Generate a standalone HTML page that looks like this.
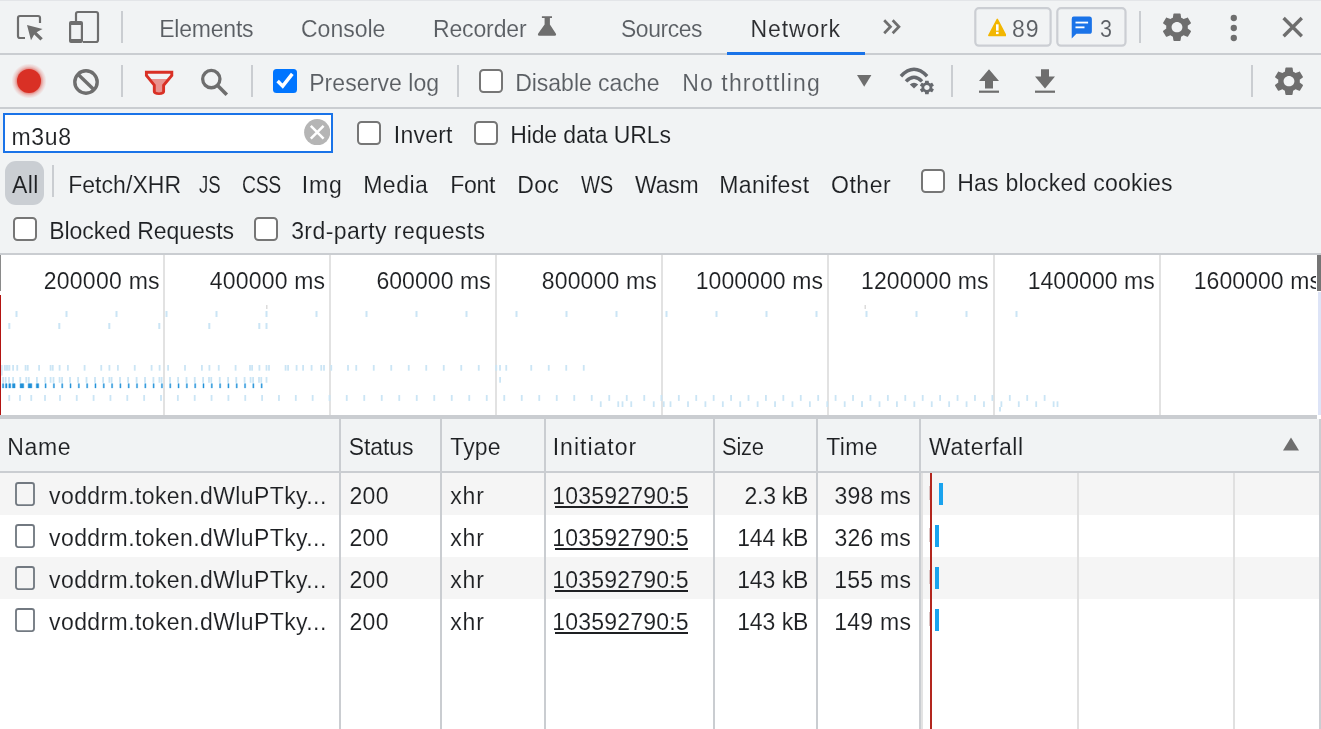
<!DOCTYPE html>
<html><head><meta charset="utf-8"><title>DevTools - Network</title>
<style>
html,body{margin:0;padding:0;background:#fff;}
body{width:1321px;height:729px;position:relative;overflow:hidden;font-family:"Liberation Sans",sans-serif;}
.t{position:absolute;white-space:nowrap;line-height:30px;font-kerning:normal;transform-origin:0 0;}
#txt{position:absolute;left:0;top:0;width:1321px;height:729px;will-change:transform;}
</style></head><body>
<div style="position:absolute;left:0px;top:0px;width:1321px;height:255px;background:#f1f3f4;"></div>
<div style="position:absolute;left:0px;top:0px;width:1321px;height:1px;background:#e3e5e8;"></div>
<div style="position:absolute;left:0px;top:53px;width:1321px;height:1.5px;background:#cacdd1;"></div>
<div style="position:absolute;left:0px;top:107px;width:1321px;height:2px;background:#cacdd1;"></div>
<div style="position:absolute;left:0px;top:253px;width:1321px;height:2px;background:#cacdd1;"></div>
<div style="position:absolute;left:727px;top:52px;width:138.3px;height:2.6px;background:#1a73e8;"></div>
<div style="position:absolute;left:121px;top:11px;width:2px;height:32px;background:#cacdd1;"></div>
<div style="position:absolute;left:1139px;top:11px;width:2px;height:31.5px;background:#cacdd1;"></div>
<div style="position:absolute;left:121px;top:65px;width:2px;height:32px;background:#cacdd1;"></div>
<div style="position:absolute;left:251px;top:65px;width:2px;height:32px;background:#cacdd1;"></div>
<div style="position:absolute;left:457px;top:65px;width:2px;height:32px;background:#cacdd1;"></div>
<div style="position:absolute;left:951px;top:65px;width:2px;height:32px;background:#cacdd1;"></div>
<div style="position:absolute;left:1250.5px;top:65px;width:2px;height:32px;background:#cacdd1;"></div>
<div style="position:absolute;left:52px;top:165px;width:2px;height:32px;background:#cacdd1;"></div>
<svg style="position:absolute;left:14px;top:12px" width="32" height="32" viewBox="0 0 32 32"><path d="M11 26 H6 Q4 26 4 24 V6 Q4 4 6 4 H24 Q26 4 26 6 V11" fill="none" stroke="#6e6e6e" stroke-width="2.2"/><path d="M13 13 L28.5 17 L22.6 20.2 L28.8 26.2 L26.4 28.6 L20.2 22.6 L17 28.3 Z" fill="#6e6e6e"/></svg>
<svg style="position:absolute;left:66px;top:8px" width="38" height="38" viewBox="0 0 38 38"><path d="M10 13 V6 Q10 4 12 4 H30 Q32 4 32 6 V32 Q32 34 30 34 H17" fill="none" stroke="#6e6e6e" stroke-width="2.2"/><path d="M5 13 H15 Q17 13 17 15 V33 Q17 35 15 35 H5 Q3 35 3 33 V15 Q3 13 5 13 Z M5.2 17 V31 H14.8 V17 Z" fill="#6e6e6e" fill-rule="evenodd"/></svg>
<svg style="position:absolute;left:535px;top:14px" width="24" height="24" viewBox="0 0 24 24"><path d="M6.9 2.2 H17 V3.9 H14.9 V10.6 L20.8 19.6 Q21.8 21.8 19.6 21.8 H4.4 Q2.2 21.8 3.2 19.6 L9.6 10.6 V3.9 H6.9 Z" fill="#6e6e6e"/></svg>
<svg style="position:absolute;left:881.4px;top:17.4px" width="22.6" height="19.6" viewBox="0 0 24 20" preserveAspectRatio="none"><path d="M3.4 3.4 L10 10 L3.4 16.6 M12.4 3.4 L19 10 L12.4 16.6" fill="none" stroke="#6e6e6e" stroke-width="2.9"/></svg>
<svg style="position:absolute;left:970px;top:4px" width="160" height="46" viewBox="970 4 160 46"><rect x="975.3" y="8.2" width="75.3" height="37.5" rx="3.6" fill="none" stroke="#cbced3" stroke-width="2.2"/><rect x="1057.3" y="8.2" width="68.2" height="37.5" rx="3.6" fill="none" stroke="#cbced3" stroke-width="2.2"/></svg>
<svg style="position:absolute;left:987.7px;top:17.5px" width="18.6" height="19.2" viewBox="0 0 20 20" preserveAspectRatio="none"><path d="M10 1.4 L19.1 18.2 H0.9 Z" fill="#f2b600" stroke="#f2b600" stroke-width="1.6" stroke-linejoin="round"/><rect x="8.6" y="6.6" width="2.8" height="6.6" fill="#fff"/><rect x="8.6" y="14.4" width="2.8" height="2.4" fill="#fff"/></svg>
<svg style="position:absolute;left:1071.4px;top:15.8px" width="21.6" height="23" viewBox="0 0 24 24" preserveAspectRatio="none"><path d="M3 0.6 H20.5 Q23.2 0.6 23.2 3.3 V15.8 Q23.2 18.5 20.5 18.5 H6 L0.8 23.4 V3 Q0.8 0.6 3 0.6 Z" fill="#1a73e8"/><rect x="5" y="5.9" width="14" height="1.9" fill="#fff"/><rect x="5" y="10.9" width="10" height="1.9" fill="#fff"/></svg>
<svg style="position:absolute;left:1159px;top:9.81px" width="36" height="34.38" viewBox="0 0 24 24" preserveAspectRatio="none"><path d="M19.14,12.94c0.04-0.3,0.06-0.61,0.06-0.94c0-0.32-0.02-0.64-0.07-0.94l2.03-1.58c0.18-0.14,0.23-0.41,0.12-0.61 l-1.92-3.32c-0.12-0.22-0.37-0.29-0.59-0.22l-2.39,0.96c-0.5-0.38-1.03-0.7-1.62-0.94L14.4,2.81c-0.04-0.24-0.24-0.41-0.48-0.41 h-3.84c-0.24,0-0.43,0.17-0.47,0.41L9.25,5.35C8.66,5.59,8.12,5.92,7.63,6.29L5.24,5.33c-0.22-0.08-0.47,0-0.59,0.22L2.74,8.87 C2.62,9.08,2.66,9.34,2.86,9.48l2.03,1.58C4.84,11.36,4.8,11.69,4.8,12s0.02,0.64,0.07,0.94l-2.03,1.58 c-0.18,0.14-0.23,0.41-0.12,0.61l1.92,3.32c0.12,0.22,0.37,0.29,0.59,0.22l2.39-0.96c0.5,0.38,1.03,0.7,1.62,0.94l0.36,2.54 c0.05,0.24,0.24,0.41,0.48,0.41h3.84c0.24,0,0.44-0.17,0.47-0.41l0.36-2.54c0.59-0.24,1.13-0.56,1.62-0.94l2.39,0.96 c0.22,0.08,0.47,0,0.59-0.22l1.92-3.32c0.12-0.22,0.07-0.47-0.12-0.61L19.14,12.94z M12,15.6c-1.98,0-3.6-1.62-3.6-3.6 s1.62-3.6,3.6-3.6s3.6,1.62,3.6,3.6S13.98,15.6,12,15.6z" fill="#6e6e6e"/></svg>
<svg style="position:absolute;left:1270.6px;top:64.01px" width="36" height="34.38" viewBox="0 0 24 24" preserveAspectRatio="none"><path d="M19.14,12.94c0.04-0.3,0.06-0.61,0.06-0.94c0-0.32-0.02-0.64-0.07-0.94l2.03-1.58c0.18-0.14,0.23-0.41,0.12-0.61 l-1.92-3.32c-0.12-0.22-0.37-0.29-0.59-0.22l-2.39,0.96c-0.5-0.38-1.03-0.7-1.62-0.94L14.4,2.81c-0.04-0.24-0.24-0.41-0.48-0.41 h-3.84c-0.24,0-0.43,0.17-0.47,0.41L9.25,5.35C8.66,5.59,8.12,5.92,7.63,6.29L5.24,5.33c-0.22-0.08-0.47,0-0.59,0.22L2.74,8.87 C2.62,9.08,2.66,9.34,2.86,9.48l2.03,1.58C4.84,11.36,4.8,11.69,4.8,12s0.02,0.64,0.07,0.94l-2.03,1.58 c-0.18,0.14-0.23,0.41-0.12,0.61l1.92,3.32c0.12,0.22,0.37,0.29,0.59,0.22l2.39-0.96c0.5,0.38,1.03,0.7,1.62,0.94l0.36,2.54 c0.05,0.24,0.24,0.41,0.48,0.41h3.84c0.24,0,0.44-0.17,0.47-0.41l0.36-2.54c0.59-0.24,1.13-0.56,1.62-0.94l2.39,0.96 c0.22,0.08,0.47,0,0.59-0.22l1.92-3.32c0.12-0.22,0.07-0.47-0.12-0.61L19.14,12.94z M12,15.6c-1.98,0-3.6-1.62-3.6-3.6 s1.62-3.6,3.6-3.6s3.6,1.62,3.6,3.6S13.98,15.6,12,15.6z" fill="#6e6e6e"/></svg>
<svg style="position:absolute;left:1229px;top:12.7px" width="10" height="10" viewBox="0 0 10 10"><circle cx="4.8" cy="5" r="3.15" fill="#6e6e6e"/></svg>
<svg style="position:absolute;left:1229px;top:22.9px" width="10" height="10" viewBox="0 0 10 10"><circle cx="4.8" cy="5" r="3.15" fill="#6e6e6e"/></svg>
<svg style="position:absolute;left:1229px;top:33.1px" width="10" height="10" viewBox="0 0 10 10"><circle cx="4.8" cy="5" r="3.15" fill="#6e6e6e"/></svg>
<svg style="position:absolute;left:1280px;top:15px" width="24" height="24" viewBox="0 0 24 24"><path d="M3.6 3 L21.8 21.2 M21.8 3 L3.6 21.2" fill="none" stroke="#6e6e6e" stroke-width="3.4"/></svg>
<div style="position:absolute;left:11px;top:63px;width:36px;height:36px;background:radial-gradient(circle closest-side, rgba(217,48,37,.55) 0, rgba(217,48,37,.55) 66%, rgba(217,48,37,.22) 80%, rgba(217,48,37,0) 97%);border-radius:50%;"></div>
<div style="position:absolute;left:17px;top:69px;width:24px;height:24px;background:#d93025;border-radius:50%;"></div>
<svg style="position:absolute;left:72px;top:68px" width="28" height="28" viewBox="0 0 28 28"><circle cx="14" cy="14" r="11.2" fill="none" stroke="#6e6e6e" stroke-width="3.4"/><path d="M6 6.2 L22 21.8" stroke="#6e6e6e" stroke-width="3.4"/></svg>
<svg style="position:absolute;left:140px;top:66px" width="40" height="34" viewBox="140 66 40 34"><path d="M150.6 79 H167.8 L163.4 85 V92 H154.4 V85 Z" fill="#e8938f"/><path d="M146.4 72.2 H171.8 V75.4 L163.6 85.2 V91.6 Q163.6 93.6 159 93.6 Q154.3 93.6 154.3 91.6 V85.2 L146.4 75.4 Z" fill="none" stroke="#d93025" stroke-width="2.9" stroke-linejoin="miter"/></svg>
<svg style="position:absolute;left:198px;top:66px" width="34" height="34" viewBox="198 66 34 34"><circle cx="211.3" cy="79.1" r="8.65" fill="none" stroke="#6e6e6e" stroke-width="3.3"/><path d="M217.6 85.6 L226.8 94.8" stroke="#6e6e6e" stroke-width="3.6"/></svg>
<svg style="position:absolute;left:273px;top:69px" width="24" height="24" viewBox="0 0 24 24"><rect x="0" y="0" width="24" height="24" rx="3.5" fill="#0075ff"/><path d="M4.6 12.1 L9.7 17.2 L19.3 4.9" fill="none" stroke="#fff" stroke-width="3.5"/></svg>
<div style="position:absolute;left:479px;top:69px;width:20px;height:20px;background:#fff;border:2px solid #767676;border-radius:4.5px;"></div>
<svg style="position:absolute;left:857px;top:75px" width="15" height="12" viewBox="0 0 15 12"><path d="M0 0 H14.4 L7.2 11.8 Z" fill="#6e6e6e"/></svg>
<svg style="position:absolute;left:897px;top:64px" width="40" height="34" viewBox="0 0 40 34"><path d="M3.9 12.2 Q17 -1.6 30.1 12.2" fill="none" stroke="#66696e" stroke-width="3.5"/><path d="M9 17.4 Q17 9.2 25 17.4" fill="none" stroke="#66696e" stroke-width="3.5"/><path d="M12.8 20.6 Q17 16.8 21.2 20.6 L17 24.4 Z" fill="#66696e"/></svg>
<div style="position:absolute;left:918.5px;top:79.5px;width:17px;height:17px;background:#f1f3f4;border-radius:50%;"></div>
<svg style="position:absolute;left:917.6px;top:79.3005px" width="17.8" height="16.999" viewBox="0 0 24 24" preserveAspectRatio="none"><path d="M19.14,12.94c0.04-0.3,0.06-0.61,0.06-0.94c0-0.32-0.02-0.64-0.07-0.94l2.03-1.58c0.18-0.14,0.23-0.41,0.12-0.61 l-1.92-3.32c-0.12-0.22-0.37-0.29-0.59-0.22l-2.39,0.96c-0.5-0.38-1.03-0.7-1.62-0.94L14.4,2.81c-0.04-0.24-0.24-0.41-0.48-0.41 h-3.84c-0.24,0-0.43,0.17-0.47,0.41L9.25,5.35C8.66,5.59,8.12,5.92,7.63,6.29L5.24,5.33c-0.22-0.08-0.47,0-0.59,0.22L2.74,8.87 C2.62,9.08,2.66,9.34,2.86,9.48l2.03,1.58C4.84,11.36,4.8,11.69,4.8,12s0.02,0.64,0.07,0.94l-2.03,1.58 c-0.18,0.14-0.23,0.41-0.12,0.61l1.92,3.32c0.12,0.22,0.37,0.29,0.59,0.22l2.39-0.96c0.5,0.38,1.03,0.7,1.62,0.94l0.36,2.54 c0.05,0.24,0.24,0.41,0.48,0.41h3.84c0.24,0,0.44-0.17,0.47-0.41l0.36-2.54c0.59-0.24,1.13-0.56,1.62-0.94l2.39,0.96 c0.22,0.08,0.47,0,0.59-0.22l1.92-3.32c0.12-0.22,0.07-0.47-0.12-0.61L19.14,12.94z M12,15.6c-1.98,0-3.6-1.62-3.6-3.6 s1.62-3.6,3.6-3.6s3.6,1.62,3.6,3.6S13.98,15.6,12,15.6z" fill="#66696e"/></svg>
<svg style="position:absolute;left:977px;top:67px" width="24" height="28" viewBox="0 0 24 28"><path d="M12 2.2 L22 14 H16 V21.4 H8 V14 H2 Z" fill="#6e6e6e"/><rect x="2" y="23.6" width="20" height="2.2" fill="#6e6e6e"/></svg>
<svg style="position:absolute;left:1033px;top:67px" width="24" height="28" viewBox="0 0 24 28"><path d="M12 21.4 L22 9.6 H16 V2.2 H8 V9.6 H2 Z" fill="#6e6e6e"/><rect x="2" y="23.6" width="20" height="2.2" fill="#6e6e6e"/></svg>
<div style="position:absolute;left:3px;top:113px;width:325.5px;height:35.5px;background:#fff;border:2px solid #1a73e8;"></div>
<svg style="position:absolute;left:303.8px;top:118.7px" width="26.4" height="26.4" viewBox="0 0 26 26"><circle cx="13" cy="13" r="12.9" fill="#b5b5b5"/><path d="M6.7 6.7 L19.3 19.3 M19.3 6.7 L6.7 19.3" stroke="#fff" stroke-width="2.5"/></svg>
<div style="position:absolute;left:357px;top:121px;width:20px;height:20px;background:#fff;border:2px solid #767676;border-radius:4.5px;"></div>
<div style="position:absolute;left:474px;top:121px;width:20px;height:20px;background:#fff;border:2px solid #767676;border-radius:4.5px;"></div>
<div style="position:absolute;left:5px;top:161px;width:39px;height:43.5px;background:#caced3;border-radius:11px;"></div>
<div style="position:absolute;left:921px;top:169px;width:20px;height:20px;background:#fff;border:2px solid #767676;border-radius:4.5px;"></div>
<div style="position:absolute;left:13px;top:217px;width:20px;height:20px;background:#fff;border:2px solid #767676;border-radius:4.5px;"></div>
<div style="position:absolute;left:254px;top:217px;width:20px;height:20px;background:#fff;border:2px solid #767676;border-radius:4.5px;"></div>
<div style="position:absolute;left:0px;top:255px;width:1321px;height:160px;background:#fff;"></div>
<div style="position:absolute;left:163px;top:255px;width:2px;height:160px;background:#e2e2e2;"></div>
<div style="position:absolute;left:329px;top:255px;width:2px;height:160px;background:#e2e2e2;"></div>
<div style="position:absolute;left:495px;top:255px;width:2px;height:160px;background:#e2e2e2;"></div>
<div style="position:absolute;left:661px;top:255px;width:2px;height:160px;background:#e2e2e2;"></div>
<div style="position:absolute;left:827px;top:255px;width:2px;height:160px;background:#e2e2e2;"></div>
<div style="position:absolute;left:993px;top:255px;width:2px;height:160px;background:#e2e2e2;"></div>
<div style="position:absolute;left:1159px;top:255px;width:2px;height:160px;background:#e2e2e2;"></div>
<div style="position:absolute;left:0px;top:255px;width:1px;height:36px;background:#8a8a8a;"></div>
<div style="position:absolute;left:0px;top:295px;width:1px;height:120px;background:#b31412;"></div>
<svg style="position:absolute;left:0;top:0" width="1321" height="420" viewBox="0 0 1321 420"><rect x="15.5" y="311" width="2" height="6" fill="#cbe5f5"/><rect x="65.5" y="311" width="2" height="6" fill="#cbe5f5"/><rect x="115.5" y="311" width="2" height="6" fill="#cbe5f5"/><rect x="165.5" y="311" width="2" height="6" fill="#cbe5f5"/><rect x="215.5" y="311" width="2" height="6" fill="#cbe5f5"/><rect x="265.5" y="311" width="2" height="6" fill="#cbe5f5"/><rect x="315.5" y="311" width="2" height="6" fill="#cbe5f5"/><rect x="365.5" y="311" width="2" height="6" fill="#cbe5f5"/><rect x="415.5" y="311" width="2" height="6" fill="#cbe5f5"/><rect x="465.5" y="311" width="2" height="6" fill="#cbe5f5"/><rect x="515.5" y="311" width="2" height="6" fill="#cbe5f5"/><rect x="565.5" y="311" width="2" height="6" fill="#cbe5f5"/><rect x="615.5" y="311" width="2" height="6" fill="#cbe5f5"/><rect x="665.5" y="311" width="2" height="6" fill="#cbe5f5"/><rect x="715.5" y="311" width="2" height="6" fill="#cbe5f5"/><rect x="765.5" y="311" width="2" height="6" fill="#cbe5f5"/><rect x="815.5" y="311" width="2" height="6" fill="#cbe5f5"/><rect x="865.5" y="311" width="2" height="6" fill="#cbe5f5"/><rect x="915.5" y="311" width="2" height="6" fill="#cbe5f5"/><rect x="965.5" y="311" width="2" height="6" fill="#cbe5f5"/><rect x="1015.5" y="311" width="2" height="6" fill="#cbe5f5"/><rect x="8.3" y="323" width="2" height="6" fill="#cbe5f5"/><rect x="58.3" y="323" width="2" height="6" fill="#cbe5f5"/><rect x="108.3" y="323" width="2" height="6" fill="#cbe5f5"/><rect x="158.3" y="323" width="2" height="6" fill="#cbe5f5"/><rect x="208.3" y="323" width="2" height="6" fill="#cbe5f5"/><rect x="258.3" y="323" width="2" height="6" fill="#cbe5f5"/><rect x="265.5" y="323" width="2" height="6" fill="#cbe5f5"/><rect x="266" y="305" width="1.5" height="4" fill="#dcdcdc"/><rect x="864.5" y="305" width="1.5" height="4" fill="#dcdcdc"/><rect x="3.85" y="365" width="1.8" height="5.7" fill="#cbe5f5"/><rect x="5.35" y="365" width="1.8" height="5.7" fill="#cbe5f5"/><rect x="6.85" y="365" width="1.8" height="5.7" fill="#cbe5f5"/><rect x="8.5" y="365" width="1.8" height="5.7" fill="#cbe5f5"/><rect x="12.2" y="365" width="1.8" height="5.7" fill="#cbe5f5"/><rect x="16.35" y="365" width="1.8" height="5.7" fill="#cbe5f5"/><rect x="24.7" y="365" width="1.8" height="5.7" fill="#cbe5f5"/><rect x="26.85" y="365" width="1.8" height="5.7" fill="#cbe5f5"/><rect x="38.2" y="365" width="1.8" height="5.7" fill="#cbe5f5"/><rect x="49.7" y="365" width="1.8" height="5.7" fill="#cbe5f5"/><rect x="51.85" y="365" width="1.8" height="5.7" fill="#cbe5f5"/><rect x="58.7" y="365" width="1.8" height="5.7" fill="#cbe5f5"/><rect x="67" y="365" width="1.8" height="5.7" fill="#cbe5f5"/><rect x="83.7" y="365" width="1.8" height="5.7" fill="#cbe5f5"/><rect x="100.35" y="365" width="1.8" height="5.7" fill="#cbe5f5"/><rect x="108.5" y="365" width="1.8" height="5.7" fill="#cbe5f5"/><rect x="117" y="365" width="1.8" height="5.7" fill="#cbe5f5"/><rect x="133.85" y="365" width="1.8" height="5.7" fill="#cbe5f5"/><rect x="150.7" y="365" width="1.8" height="5.7" fill="#cbe5f5"/><rect x="158.7" y="365" width="1.8" height="5.7" fill="#cbe5f5"/><rect x="167.2" y="365" width="1.8" height="5.7" fill="#cbe5f5"/><rect x="184.1" y="365" width="1.8" height="5.7" fill="#cbe5f5"/><rect x="201" y="365" width="1.8" height="5.7" fill="#cbe5f5"/><rect x="208.5" y="365" width="1.8" height="5.7" fill="#cbe5f5"/><rect x="217.85" y="365" width="1.8" height="5.7" fill="#cbe5f5"/><rect x="234.7" y="365" width="1.8" height="5.7" fill="#cbe5f5"/><rect x="249.1" y="365" width="1.8" height="5.7" fill="#cbe5f5"/><rect x="251.2" y="365" width="1.8" height="5.7" fill="#cbe5f5"/><rect x="258.5" y="365" width="1.8" height="5.7" fill="#cbe5f5"/><rect x="265.6" y="365" width="1.8" height="5.7" fill="#cbe5f5"/><rect x="268.1" y="365" width="1.8" height="5.7" fill="#cbe5f5"/><rect x="284.7" y="365" width="1.8" height="5.7" fill="#cbe5f5"/><rect x="287.2" y="365" width="1.8" height="5.7" fill="#cbe5f5"/><rect x="295.7" y="365" width="1.8" height="5.7" fill="#cbe5f5"/><rect x="302.2" y="365" width="1.8" height="5.7" fill="#cbe5f5"/><rect x="310.7" y="365" width="1.8" height="5.7" fill="#cbe5f5"/><rect x="320.35" y="365" width="1.8" height="5.7" fill="#cbe5f5"/><rect x="323.1" y="365" width="1.8" height="5.7" fill="#cbe5f5"/><rect x="330.35" y="365" width="1.8" height="5.7" fill="#cbe5f5"/><rect x="347.1" y="365" width="1.8" height="5.7" fill="#cbe5f5"/><rect x="355.35" y="365" width="1.8" height="5.7" fill="#cbe5f5"/><rect x="372.85" y="365" width="1.8" height="5.7" fill="#cbe5f5"/><rect x="390.35" y="365" width="1.8" height="5.7" fill="#cbe5f5"/><rect x="407.85" y="365" width="1.8" height="5.7" fill="#cbe5f5"/><rect x="425.35" y="365" width="1.8" height="5.7" fill="#cbe5f5"/><rect x="442.85" y="365" width="1.8" height="5.7" fill="#cbe5f5"/><rect x="460.35" y="365" width="1.8" height="5.7" fill="#cbe5f5"/><rect x="477.85" y="365" width="1.8" height="5.7" fill="#cbe5f5"/><rect x="495.35" y="365" width="1.8" height="5.7" fill="#cbe5f5"/><rect x="499.1" y="365" width="1.8" height="5.7" fill="#cbe5f5"/><rect x="505.35" y="365" width="1.8" height="5.7" fill="#cbe5f5"/><rect x="530.35" y="365" width="1.8" height="5.7" fill="#cbe5f5"/><rect x="547.85" y="365" width="1.8" height="5.7" fill="#cbe5f5"/><rect x="565.35" y="365" width="1.8" height="5.7" fill="#cbe5f5"/><rect x="582.85" y="365" width="1.8" height="5.7" fill="#cbe5f5"/><rect x="1.2" y="365" width="1.4" height="10.6" fill="#cbe5f5"/><rect x="499.2" y="377" width="1.8" height="5.7" fill="#cbe5f5"/><rect x="2.2" y="377" width="1.8" height="5.8" fill="#cbe5f5"/><rect x="4.7" y="377" width="1.8" height="5.8" fill="#cbe5f5"/><rect x="8.1" y="377" width="1.8" height="5.8" fill="#cbe5f5"/><rect x="12.2" y="377" width="1.8" height="5.8" fill="#cbe5f5"/><rect x="19.35" y="377" width="1.8" height="5.8" fill="#cbe5f5"/><rect x="25.35" y="377" width="1.8" height="5.8" fill="#cbe5f5"/><rect x="27.85" y="377" width="1.8" height="5.8" fill="#cbe5f5"/><rect x="36" y="377" width="1.8" height="5.8" fill="#cbe5f5"/><rect x="44.35" y="377" width="1.8" height="5.8" fill="#cbe5f5"/><rect x="49.7" y="377" width="1.8" height="5.8" fill="#cbe5f5"/><rect x="52.6" y="377" width="1.8" height="5.8" fill="#cbe5f5"/><rect x="58.7" y="377" width="1.8" height="5.8" fill="#cbe5f5"/><rect x="61.2" y="377" width="1.8" height="5.8" fill="#cbe5f5"/><rect x="69.1" y="377" width="1.8" height="5.8" fill="#cbe5f5"/><rect x="77.2" y="377" width="1.8" height="5.8" fill="#cbe5f5"/><rect x="85.6" y="377" width="1.8" height="5.8" fill="#cbe5f5"/><rect x="94.1" y="377" width="1.8" height="5.8" fill="#cbe5f5"/><rect x="102.2" y="377" width="1.8" height="5.8" fill="#cbe5f5"/><rect x="108.5" y="377" width="1.8" height="5.8" fill="#cbe5f5"/><rect x="110.7" y="377" width="1.8" height="5.8" fill="#cbe5f5"/><rect x="119.1" y="377" width="1.8" height="5.8" fill="#cbe5f5"/><rect x="127.2" y="377" width="1.8" height="5.8" fill="#cbe5f5"/><rect x="135.7" y="377" width="1.8" height="5.8" fill="#cbe5f5"/><rect x="144.1" y="377" width="1.8" height="5.8" fill="#cbe5f5"/><rect x="152.5" y="377" width="1.8" height="5.8" fill="#cbe5f5"/><rect x="158.5" y="377" width="1.8" height="5.8" fill="#cbe5f5"/><rect x="160.7" y="377" width="1.8" height="5.8" fill="#cbe5f5"/><rect x="169.1" y="377" width="1.8" height="5.8" fill="#cbe5f5"/><rect x="177.2" y="377" width="1.8" height="5.8" fill="#cbe5f5"/><rect x="185.6" y="377" width="1.8" height="5.8" fill="#cbe5f5"/><rect x="193.85" y="377" width="1.8" height="5.8" fill="#cbe5f5"/><rect x="202.2" y="377" width="1.8" height="5.8" fill="#cbe5f5"/><rect x="208.1" y="377" width="1.8" height="5.8" fill="#cbe5f5"/><rect x="210.35" y="377" width="1.8" height="5.8" fill="#cbe5f5"/><rect x="218.85" y="377" width="1.8" height="5.8" fill="#cbe5f5"/><rect x="227.2" y="377" width="1.8" height="5.8" fill="#cbe5f5"/><rect x="235.35" y="377" width="1.8" height="5.8" fill="#cbe5f5"/><rect x="243.7" y="377" width="1.8" height="5.8" fill="#cbe5f5"/><rect x="249.7" y="377" width="1.8" height="5.8" fill="#cbe5f5"/><rect x="252.2" y="377" width="1.8" height="5.8" fill="#cbe5f5"/><rect x="258.1" y="377" width="1.8" height="5.8" fill="#cbe5f5"/><rect x="260.35" y="377" width="1.8" height="5.8" fill="#cbe5f5"/><rect x="265.6" y="377" width="1.8" height="5.8" fill="#cbe5f5"/><rect x="1.9" y="383.5" width="2.4" height="4.6" fill="#a6d5f2"/><rect x="2.5" y="383.5" width="1.2" height="4.6" fill="#2090d8"/><rect x="4.9" y="383.5" width="2.7" height="4.6" fill="#a6d5f2"/><rect x="5.5" y="383.5" width="1.5" height="4.6" fill="#2090d8"/><rect x="8.25" y="383.5" width="3" height="4.6" fill="#a6d5f2"/><rect x="8.85" y="383.5" width="1.8" height="4.6" fill="#2090d8"/><rect x="11.85" y="383.5" width="3.8" height="4.6" fill="#a6d5f2"/><rect x="12.45" y="383.5" width="2.6" height="4.6" fill="#2090d8"/><rect x="19.5" y="383.5" width="4.8" height="4.6" fill="#a6d5f2"/><rect x="20.1" y="383.5" width="3.6" height="4.6" fill="#2090d8"/><rect x="27.6" y="383.5" width="4.8" height="4.6" fill="#a6d5f2"/><rect x="28.2" y="383.5" width="3.6" height="4.6" fill="#2090d8"/><rect x="35.7" y="383.5" width="3.6" height="4.6" fill="#a6d5f2"/><rect x="36.3" y="383.5" width="2.4" height="4.6" fill="#2090d8"/><rect x="44.5" y="383.5" width="2.2" height="4.6" fill="#a6d5f2"/><rect x="45.1" y="383.5" width="1" height="4.6" fill="#2090d8"/><rect x="52.81" y="383.5" width="2.2" height="4.6" fill="#a6d5f2"/><rect x="53.41" y="383.5" width="1" height="4.6" fill="#2090d8"/><rect x="61.12" y="383.5" width="2.2" height="4.6" fill="#a6d5f2"/><rect x="61.72" y="383.5" width="1" height="4.6" fill="#2090d8"/><rect x="69.43" y="383.5" width="2.2" height="4.6" fill="#a6d5f2"/><rect x="70.03" y="383.5" width="1" height="4.6" fill="#2090d8"/><rect x="77.74" y="383.5" width="2.2" height="4.6" fill="#a6d5f2"/><rect x="78.34" y="383.5" width="1" height="4.6" fill="#2090d8"/><rect x="86.05" y="383.5" width="2.2" height="4.6" fill="#a6d5f2"/><rect x="86.65" y="383.5" width="1" height="4.6" fill="#2090d8"/><rect x="94.36" y="383.5" width="2.2" height="4.6" fill="#a6d5f2"/><rect x="94.96" y="383.5" width="1" height="4.6" fill="#2090d8"/><rect x="102.67" y="383.5" width="2.2" height="4.6" fill="#a6d5f2"/><rect x="103.27" y="383.5" width="1" height="4.6" fill="#2090d8"/><rect x="110.98" y="383.5" width="2.2" height="4.6" fill="#a6d5f2"/><rect x="111.58" y="383.5" width="1" height="4.6" fill="#2090d8"/><rect x="119.29" y="383.5" width="2.2" height="4.6" fill="#a6d5f2"/><rect x="119.89" y="383.5" width="1" height="4.6" fill="#2090d8"/><rect x="127.6" y="383.5" width="2.2" height="4.6" fill="#a6d5f2"/><rect x="128.2" y="383.5" width="1" height="4.6" fill="#2090d8"/><rect x="135.91" y="383.5" width="2.2" height="4.6" fill="#a6d5f2"/><rect x="136.51" y="383.5" width="1" height="4.6" fill="#2090d8"/><rect x="144.22" y="383.5" width="2.2" height="4.6" fill="#a6d5f2"/><rect x="144.82" y="383.5" width="1" height="4.6" fill="#2090d8"/><rect x="152.53" y="383.5" width="2.2" height="4.6" fill="#a6d5f2"/><rect x="153.13" y="383.5" width="1" height="4.6" fill="#2090d8"/><rect x="160.84" y="383.5" width="2.2" height="4.6" fill="#a6d5f2"/><rect x="161.44" y="383.5" width="1" height="4.6" fill="#2090d8"/><rect x="169.15" y="383.5" width="2.2" height="4.6" fill="#a6d5f2"/><rect x="169.75" y="383.5" width="1" height="4.6" fill="#2090d8"/><rect x="177.46" y="383.5" width="2.2" height="4.6" fill="#a6d5f2"/><rect x="178.06" y="383.5" width="1" height="4.6" fill="#2090d8"/><rect x="185.77" y="383.5" width="2.2" height="4.6" fill="#a6d5f2"/><rect x="186.37" y="383.5" width="1" height="4.6" fill="#2090d8"/><rect x="194.08" y="383.5" width="2.2" height="4.6" fill="#a6d5f2"/><rect x="194.68" y="383.5" width="1" height="4.6" fill="#2090d8"/><rect x="202.39" y="383.5" width="2.2" height="4.6" fill="#a6d5f2"/><rect x="202.99" y="383.5" width="1" height="4.6" fill="#2090d8"/><rect x="210.7" y="383.5" width="2.2" height="4.6" fill="#a6d5f2"/><rect x="211.3" y="383.5" width="1" height="4.6" fill="#2090d8"/><rect x="219.01" y="383.5" width="2.2" height="4.6" fill="#a6d5f2"/><rect x="219.61" y="383.5" width="1" height="4.6" fill="#2090d8"/><rect x="227.32" y="383.5" width="2.2" height="4.6" fill="#a6d5f2"/><rect x="227.92" y="383.5" width="1" height="4.6" fill="#2090d8"/><rect x="235.63" y="383.5" width="2.2" height="4.6" fill="#a6d5f2"/><rect x="236.23" y="383.5" width="1" height="4.6" fill="#2090d8"/><rect x="243.94" y="383.5" width="2.2" height="4.6" fill="#a6d5f2"/><rect x="244.54" y="383.5" width="1" height="4.6" fill="#2090d8"/><rect x="252.25" y="383.5" width="2.2" height="4.6" fill="#a6d5f2"/><rect x="252.85" y="383.5" width="1" height="4.6" fill="#2090d8"/><rect x="260.56" y="383.5" width="2.2" height="4.6" fill="#a6d5f2"/><rect x="261.16" y="383.5" width="1" height="4.6" fill="#2090d8"/><rect x="8.35" y="395" width="1.8" height="5.9" fill="#cbe5f5"/><rect x="19.1" y="395" width="1.8" height="5.9" fill="#cbe5f5"/><rect x="30.35" y="395" width="1.8" height="5.9" fill="#cbe5f5"/><rect x="44.1" y="395" width="1.8" height="5.9" fill="#cbe5f5"/><rect x="59.1" y="395" width="1.8" height="5.9" fill="#cbe5f5"/><rect x="75.85" y="395" width="1.8" height="5.9" fill="#cbe5f5"/><rect x="92.7" y="395" width="1.8" height="5.9" fill="#cbe5f5"/><rect x="109.55" y="395" width="1.8" height="5.9" fill="#cbe5f5"/><rect x="126.4" y="395" width="1.8" height="5.9" fill="#cbe5f5"/><rect x="143.25" y="395" width="1.8" height="5.9" fill="#cbe5f5"/><rect x="160.1" y="395" width="1.8" height="5.9" fill="#cbe5f5"/><rect x="176.95" y="395" width="1.8" height="5.9" fill="#cbe5f5"/><rect x="193.8" y="395" width="1.8" height="5.9" fill="#cbe5f5"/><rect x="210.65" y="395" width="1.8" height="5.9" fill="#cbe5f5"/><rect x="227.5" y="395" width="1.8" height="5.9" fill="#cbe5f5"/><rect x="244.35" y="395" width="1.8" height="5.9" fill="#cbe5f5"/><rect x="261.2" y="395" width="1.8" height="5.9" fill="#cbe5f5"/><rect x="278.05" y="395" width="1.8" height="5.9" fill="#cbe5f5"/><rect x="294.9" y="395" width="1.8" height="5.9" fill="#cbe5f5"/><rect x="311.75" y="395" width="1.8" height="5.9" fill="#cbe5f5"/><rect x="328.6" y="395" width="1.8" height="5.9" fill="#cbe5f5"/><rect x="345.85" y="395" width="1.8" height="5.9" fill="#cbe5f5"/><rect x="363.35" y="395" width="1.8" height="5.9" fill="#cbe5f5"/><rect x="380.85" y="395" width="1.8" height="5.9" fill="#cbe5f5"/><rect x="398.35" y="395" width="1.8" height="5.9" fill="#cbe5f5"/><rect x="415.85" y="395" width="1.8" height="5.9" fill="#cbe5f5"/><rect x="433.35" y="395" width="1.8" height="5.9" fill="#cbe5f5"/><rect x="450.85" y="395" width="1.8" height="5.9" fill="#cbe5f5"/><rect x="468.35" y="395" width="1.8" height="5.9" fill="#cbe5f5"/><rect x="485.85" y="395" width="1.8" height="5.9" fill="#cbe5f5"/><rect x="503.35" y="395" width="1.8" height="5.9" fill="#cbe5f5"/><rect x="520.85" y="395" width="1.8" height="5.9" fill="#cbe5f5"/><rect x="538.35" y="395" width="1.8" height="5.9" fill="#cbe5f5"/><rect x="555.85" y="395" width="1.8" height="5.9" fill="#cbe5f5"/><rect x="573.35" y="395" width="1.8" height="5.9" fill="#cbe5f5"/><rect x="590.85" y="395" width="1.8" height="5.9" fill="#cbe5f5"/><rect x="608.35" y="395" width="1.8" height="5.9" fill="#cbe5f5"/><rect x="625.85" y="395" width="1.8" height="5.9" fill="#cbe5f5"/><rect x="643.35" y="395" width="1.8" height="5.9" fill="#cbe5f5"/><rect x="660.5" y="395" width="1.8" height="5.9" fill="#cbe5f5"/><rect x="677.92" y="395" width="1.8" height="5.9" fill="#cbe5f5"/><rect x="695.34" y="395" width="1.8" height="5.9" fill="#cbe5f5"/><rect x="712.76" y="395" width="1.8" height="5.9" fill="#cbe5f5"/><rect x="730.18" y="395" width="1.8" height="5.9" fill="#cbe5f5"/><rect x="747.6" y="395" width="1.8" height="5.9" fill="#cbe5f5"/><rect x="765.02" y="395" width="1.8" height="5.9" fill="#cbe5f5"/><rect x="782.44" y="395" width="1.8" height="5.9" fill="#cbe5f5"/><rect x="799.86" y="395" width="1.8" height="5.9" fill="#cbe5f5"/><rect x="817.28" y="395" width="1.8" height="5.9" fill="#cbe5f5"/><rect x="834.7" y="395" width="1.8" height="5.9" fill="#cbe5f5"/><rect x="852.12" y="395" width="1.8" height="5.9" fill="#cbe5f5"/><rect x="869.54" y="395" width="1.8" height="5.9" fill="#cbe5f5"/><rect x="886.96" y="395" width="1.8" height="5.9" fill="#cbe5f5"/><rect x="904.38" y="395" width="1.8" height="5.9" fill="#cbe5f5"/><rect x="921.8" y="395" width="1.8" height="5.9" fill="#cbe5f5"/><rect x="939.22" y="395" width="1.8" height="5.9" fill="#cbe5f5"/><rect x="956.64" y="395" width="1.8" height="5.9" fill="#cbe5f5"/><rect x="974.06" y="395" width="1.8" height="5.9" fill="#cbe5f5"/><rect x="991.48" y="395" width="1.8" height="5.9" fill="#cbe5f5"/><rect x="1008.9" y="395" width="1.8" height="5.9" fill="#cbe5f5"/><rect x="1026.32" y="395" width="1.8" height="5.9" fill="#cbe5f5"/><rect x="1043.74" y="395" width="1.8" height="5.9" fill="#cbe5f5"/><rect x="599.85" y="401.3" width="1.8" height="5.7" fill="#cbe5f5"/><rect x="617.35" y="401.3" width="1.8" height="5.7" fill="#cbe5f5"/><rect x="621.6" y="401.3" width="1.8" height="5.7" fill="#cbe5f5"/><rect x="630.35" y="401.3" width="1.8" height="5.7" fill="#cbe5f5"/><rect x="652.85" y="401.3" width="1.8" height="5.7" fill="#cbe5f5"/><rect x="662.85" y="401.3" width="1.8" height="5.7" fill="#cbe5f5"/><rect x="669.6" y="401.3" width="1.8" height="5.7" fill="#cbe5f5"/><rect x="861.1" y="401.3" width="1.8" height="5.7" fill="#cbe5f5"/><rect x="1056.6" y="401.3" width="1.8" height="5.7" fill="#cbe5f5"/><rect x="687.1" y="401.3" width="1.8" height="5.7" fill="#cbe5f5"/><rect x="704.51" y="401.3" width="1.8" height="5.7" fill="#cbe5f5"/><rect x="721.92" y="401.3" width="1.8" height="5.7" fill="#cbe5f5"/><rect x="739.33" y="401.3" width="1.8" height="5.7" fill="#cbe5f5"/><rect x="756.74" y="401.3" width="1.8" height="5.7" fill="#cbe5f5"/><rect x="774.15" y="401.3" width="1.8" height="5.7" fill="#cbe5f5"/><rect x="791.56" y="401.3" width="1.8" height="5.7" fill="#cbe5f5"/><rect x="808.97" y="401.3" width="1.8" height="5.7" fill="#cbe5f5"/><rect x="826.38" y="401.3" width="1.8" height="5.7" fill="#cbe5f5"/><rect x="843.79" y="401.3" width="1.8" height="5.7" fill="#cbe5f5"/><rect x="861.2" y="401.3" width="1.8" height="5.7" fill="#cbe5f5"/><rect x="878.61" y="401.3" width="1.8" height="5.7" fill="#cbe5f5"/><rect x="896.02" y="401.3" width="1.8" height="5.7" fill="#cbe5f5"/><rect x="913.43" y="401.3" width="1.8" height="5.7" fill="#cbe5f5"/><rect x="930.84" y="401.3" width="1.8" height="5.7" fill="#cbe5f5"/><rect x="948.25" y="401.3" width="1.8" height="5.7" fill="#cbe5f5"/><rect x="965.66" y="401.3" width="1.8" height="5.7" fill="#cbe5f5"/><rect x="983.07" y="401.3" width="1.8" height="5.7" fill="#cbe5f5"/><rect x="1000.48" y="401.3" width="1.8" height="5.7" fill="#cbe5f5"/><rect x="1017.89" y="401.3" width="1.8" height="5.7" fill="#cbe5f5"/><rect x="1035.3" y="401.3" width="1.8" height="5.7" fill="#cbe5f5"/><rect x="1052.71" y="401.3" width="1.8" height="5.7" fill="#cbe5f5"/><rect x="999" y="407" width="2" height="4.5" fill="#cbe5f5"/></svg>
<div style="position:absolute;left:0px;top:415px;width:1317px;height:4px;background:#cacdd1;"></div>
<div style="position:absolute;left:0px;top:419px;width:1321px;height:52px;background:#f1f3f4;"></div>
<div style="position:absolute;left:0px;top:471px;width:1321px;height:1.6px;background:#cacdd1;"></div>
<div style="position:absolute;left:0px;top:472.6px;width:1321px;height:42px;background:#f5f5f5;"></div>
<div style="position:absolute;left:0px;top:515px;width:1321px;height:42px;background:#fff;"></div>
<div style="position:absolute;left:0px;top:557px;width:1321px;height:42px;background:#f5f5f5;"></div>
<div style="position:absolute;left:0px;top:599px;width:1321px;height:42px;background:#fff;"></div>
<div style="position:absolute;left:0px;top:641px;width:1321px;height:88px;background:#fff;"></div>
<div style="position:absolute;left:339px;top:419px;width:2px;height:310px;background:#cacdd1;"></div>
<div style="position:absolute;left:440px;top:419px;width:2px;height:310px;background:#cacdd1;"></div>
<div style="position:absolute;left:544px;top:419px;width:2px;height:310px;background:#cacdd1;"></div>
<div style="position:absolute;left:713px;top:419px;width:2px;height:310px;background:#cacdd1;"></div>
<div style="position:absolute;left:816px;top:419px;width:2px;height:310px;background:#cacdd1;"></div>
<div style="position:absolute;left:919px;top:419px;width:2px;height:310px;background:#cacdd1;"></div>
<div style="position:absolute;left:921px;top:472.6px;width:2px;height:257px;background:#e3e3e3;"></div>
<div style="position:absolute;left:1319px;top:419px;width:2px;height:310px;background:#cacdd1;"></div>
<div style="position:absolute;left:1076.8px;top:472.6px;width:2px;height:257px;background:#e0e0e0;"></div>
<div style="position:absolute;left:1233px;top:472.6px;width:2px;height:257px;background:#e0e0e0;"></div>
<div style="position:absolute;left:930.4px;top:472.6px;width:2px;height:257px;background:#b3261e;"></div>
<div style="position:absolute;left:928.8px;top:486px;width:1.4px;height:14px;background:#dcc3c3;"></div>
<div style="position:absolute;left:939px;top:483px;width:4px;height:22px;background:#1aa3ee;"></div>
<div style="position:absolute;left:554.5px;top:506.2px;width:133.5px;height:1.8px;background:#1e2023;"></div>
<svg style="position:absolute;left:15px;top:481.95px" width="20" height="24" viewBox="0 0 20 24"><rect x="1" y="0.95" width="18" height="22.1" rx="2.2" fill="none" stroke="#727981" stroke-width="1.85"/></svg>
<div style="position:absolute;left:928.8px;top:528px;width:1.4px;height:14px;background:#dcc3c3;"></div>
<div style="position:absolute;left:935px;top:525px;width:4px;height:22px;background:#1aa3ee;"></div>
<div style="position:absolute;left:554.5px;top:548.2px;width:133.5px;height:1.8px;background:#1e2023;"></div>
<svg style="position:absolute;left:15px;top:523.95px" width="20" height="24" viewBox="0 0 20 24"><rect x="1" y="0.95" width="18" height="22.1" rx="2.2" fill="none" stroke="#727981" stroke-width="1.85"/></svg>
<div style="position:absolute;left:928.8px;top:570px;width:1.4px;height:14px;background:#dcc3c3;"></div>
<div style="position:absolute;left:935px;top:567px;width:4px;height:22px;background:#1aa3ee;"></div>
<div style="position:absolute;left:554.5px;top:590.2px;width:133.5px;height:1.8px;background:#1e2023;"></div>
<svg style="position:absolute;left:15px;top:565.95px" width="20" height="24" viewBox="0 0 20 24"><rect x="1" y="0.95" width="18" height="22.1" rx="2.2" fill="none" stroke="#727981" stroke-width="1.85"/></svg>
<div style="position:absolute;left:928.8px;top:612px;width:1.4px;height:14px;background:#dcc3c3;"></div>
<div style="position:absolute;left:935px;top:609px;width:4px;height:22px;background:#1aa3ee;"></div>
<div style="position:absolute;left:554.5px;top:632.2px;width:133.5px;height:1.8px;background:#1e2023;"></div>
<svg style="position:absolute;left:15px;top:607.95px" width="20" height="24" viewBox="0 0 20 24"><rect x="1" y="0.95" width="18" height="22.1" rx="2.2" fill="none" stroke="#727981" stroke-width="1.85"/></svg>
<svg style="position:absolute;left:1283px;top:437px" width="16" height="14" viewBox="0 0 16 14"><path d="M8 0.4 L16 13.4 H0 Z" fill="#6e6e6e"/></svg>
<div id="txt"><span class="t" id="t0" style="left:159.18px;top:14.03px;font-size:23px;color:#5a5e63;letter-spacing:-0.209px;-webkit-text-stroke:0.1px #f1f3f4;">Elements</span>
<span class="t" id="t1" style="left:301.00px;top:14.03px;font-size:23px;color:#5a5e63;letter-spacing:0.000px;-webkit-text-stroke:0.1px #f1f3f4;">Console</span>
<span class="t" id="t2" style="left:432.91px;top:14.03px;font-size:23px;color:#5a5e63;letter-spacing:-0.121px;-webkit-text-stroke:0.1px #f1f3f4;">Recorder</span>
<span class="t" id="t3" style="left:621.00px;top:14.03px;font-size:23px;color:#5a5e63;letter-spacing:-0.390px;transform:scaleX(0.9939);-webkit-text-stroke:0.1px #f1f3f4;">Sources</span>
<span class="t" id="t4" style="left:750.58px;top:14.03px;font-size:23px;color:#2c2d30;letter-spacing:0.850px;-webkit-text-stroke:0.1px #f1f3f4;">Network</span>
<span class="t" id="t5" style="left:1012.00px;top:14.03px;font-size:23px;color:#5a5e63;letter-spacing:0.851px;-webkit-text-stroke:0.1px #f1f3f4;">89</span>
<span class="t" id="t6" style="left:1100.01px;top:14.03px;font-size:23px;color:#5a5e63;letter-spacing:0.000px;transform:scaleX(0.9372);-webkit-text-stroke:0.1px #f1f3f4;">3</span>
<span class="t" id="t7" style="left:309.18px;top:68.03px;font-size:23px;color:#5a5e63;letter-spacing:0.079px;-webkit-text-stroke:0.1px #f1f3f4;">Preserve log</span>
<span class="t" id="t8" style="left:515.18px;top:68.03px;font-size:23px;color:#5a5e63;letter-spacing:-0.018px;-webkit-text-stroke:0.1px #f1f3f4;">Disable cache</span>
<span class="t" id="t9" style="left:682.18px;top:68.03px;font-size:23px;color:#5a5e63;letter-spacing:1.133px;-webkit-text-stroke:0.1px #f1f3f4;">No throttling</span>
<span class="t" id="t10" style="left:11.53px;top:122.03px;font-size:23px;color:#1e2023;letter-spacing:0.688px;-webkit-text-stroke:0.1px #fff;">m3u8</span>
<span class="t" id="t11" style="left:393.82px;top:120.03px;font-size:23px;color:#1e2023;letter-spacing:0.212px;-webkit-text-stroke:0.1px #f1f3f4;">Invert</span>
<span class="t" id="t12" style="left:510.18px;top:120.03px;font-size:23px;color:#1e2023;letter-spacing:-0.123px;-webkit-text-stroke:0.1px #f1f3f4;">Hide data URLs</span>
<span class="t" id="t13" style="left:11.90px;top:170.03px;font-size:23px;color:#1e2023;letter-spacing:0.401px;-webkit-text-stroke:0.1px #caced3;">All</span>
<span class="t" id="t14" style="left:68.18px;top:170.03px;font-size:23px;color:#1e2023;letter-spacing:0.053px;-webkit-text-stroke:0.1px #f1f3f4;">Fetch/XHR</span>
<span class="t" id="t15" style="left:198.92px;top:170.03px;font-size:23px;color:#1e2023;letter-spacing:-0.019px;transform:scaleX(0.8099);-webkit-text-stroke:0.1px #f1f3f4;">JS</span>
<span class="t" id="t16" style="left:242.00px;top:170.03px;font-size:23px;color:#1e2023;letter-spacing:-0.450px;transform:scaleX(0.8455);-webkit-text-stroke:0.1px #f1f3f4;">CSS</span>
<span class="t" id="t17" style="left:301.82px;top:170.03px;font-size:23px;color:#1e2023;letter-spacing:0.859px;-webkit-text-stroke:0.1px #f1f3f4;">Img</span>
<span class="t" id="t18" style="left:363.18px;top:170.03px;font-size:23px;color:#1e2023;letter-spacing:0.512px;-webkit-text-stroke:0.1px #f1f3f4;">Media</span>
<span class="t" id="t19" style="left:450.18px;top:170.03px;font-size:23px;color:#1e2023;letter-spacing:-0.265px;-webkit-text-stroke:0.1px #f1f3f4;">Font</span>
<span class="t" id="t20" style="left:517.18px;top:170.03px;font-size:23px;color:#1e2023;letter-spacing:0.397px;-webkit-text-stroke:0.1px #f1f3f4;">Doc</span>
<span class="t" id="t21" style="left:581.00px;top:170.03px;font-size:23px;color:#1e2023;letter-spacing:-0.213px;transform:scaleX(0.8778);-webkit-text-stroke:0.1px #f1f3f4;">WS</span>
<span class="t" id="t22" style="left:635.12px;top:170.03px;font-size:23px;color:#1e2023;letter-spacing:-0.286px;-webkit-text-stroke:0.1px #f1f3f4;">Wasm</span>
<span class="t" id="t23" style="left:719.18px;top:170.03px;font-size:23px;color:#1e2023;letter-spacing:0.429px;-webkit-text-stroke:0.1px #f1f3f4;">Manifest</span>
<span class="t" id="t24" style="left:831.00px;top:170.03px;font-size:23px;color:#1e2023;letter-spacing:0.518px;-webkit-text-stroke:0.1px #f1f3f4;">Other</span>
<span class="t" id="t25" style="left:957.18px;top:168.03px;font-size:23px;color:#1e2023;letter-spacing:0.250px;-webkit-text-stroke:0.1px #f1f3f4;">Has blocked cookies</span>
<span class="t" id="t26" style="left:49.18px;top:216.03px;font-size:23px;color:#1e2023;letter-spacing:-0.032px;-webkit-text-stroke:0.1px #f1f3f4;">Blocked Requests</span>
<span class="t" id="t27" style="left:291.14px;top:216.03px;font-size:23px;color:#1e2023;letter-spacing:0.432px;-webkit-text-stroke:0.1px #f1f3f4;">3rd-party requests</span>
<span class="t" id="t28" style="left:43.68px;top:265.53px;font-size:23px;color:#1e2023;letter-spacing:0.262px;-webkit-text-stroke:0.1px #fff;">200000 ms</span>
<span class="t" id="t29" style="left:209.77px;top:265.53px;font-size:23px;color:#1e2023;letter-spacing:0.190px;-webkit-text-stroke:0.1px #fff;">400000 ms</span>
<span class="t" id="t30" style="left:376.41px;top:265.53px;font-size:23px;color:#1e2023;letter-spacing:0.058px;-webkit-text-stroke:0.1px #fff;">600000 ms</span>
<span class="t" id="t31" style="left:541.84px;top:265.53px;font-size:23px;color:#1e2023;letter-spacing:0.138px;-webkit-text-stroke:0.1px #fff;">800000 ms</span>
<span class="t" id="t32" style="left:695.68px;top:265.53px;font-size:23px;color:#1e2023;letter-spacing:0.070px;-webkit-text-stroke:0.1px #fff;">1000000 ms</span>
<span class="t" id="t33" style="left:861.08px;top:265.53px;font-size:23px;color:#1e2023;letter-spacing:0.098px;-webkit-text-stroke:0.1px #fff;">1200000 ms</span>
<span class="t" id="t34" style="left:1027.68px;top:265.53px;font-size:23px;color:#1e2023;letter-spacing:0.052px;-webkit-text-stroke:0.1px #fff;">1400000 ms</span>
<span class="t" id="t35" style="left:1193.68px;top:265.53px;font-size:23px;color:#1e2023;letter-spacing:0.070px;-webkit-text-stroke:0.1px #fff;">1600000 ms</span>
<span class="t" id="t36" style="left:7.18px;top:432.03px;font-size:23px;color:#1e2023;letter-spacing:0.671px;-webkit-text-stroke:0.1px #f1f3f4;">Name</span>
<span class="t" id="t37" style="left:348.78px;top:432.03px;font-size:23px;color:#1e2023;letter-spacing:-0.096px;-webkit-text-stroke:0.1px #f1f3f4;">Status</span>
<span class="t" id="t38" style="left:450.20px;top:432.03px;font-size:23px;color:#1e2023;letter-spacing:0.165px;-webkit-text-stroke:0.1px #f1f3f4;">Type</span>
<span class="t" id="t39" style="left:552.73px;top:432.03px;font-size:23px;color:#1e2023;letter-spacing:1.012px;-webkit-text-stroke:0.1px #f1f3f4;">Initiator</span>
<span class="t" id="t40" style="left:722.43px;top:432.03px;font-size:23px;color:#1e2023;letter-spacing:-0.309px;transform:scaleX(0.9565);-webkit-text-stroke:0.1px #f1f3f4;">Size</span>
<span class="t" id="t41" style="left:826.20px;top:432.03px;font-size:23px;color:#1e2023;letter-spacing:0.390px;-webkit-text-stroke:0.1px #f1f3f4;">Time</span>
<span class="t" id="t42" style="left:929.08px;top:432.03px;font-size:23px;color:#1e2023;letter-spacing:0.517px;-webkit-text-stroke:0.1px #f1f3f4;">Waterfall</span>
<span class="t" id="t43" style="left:49.04px;top:481.03px;font-size:23px;color:#1e2023;letter-spacing:0.402px;-webkit-text-stroke:0.1px #f5f5f5;">voddrm.token.dWluPTky...</span>
<span class="t" id="t44" style="left:349.46px;top:481.03px;font-size:23px;color:#1e2023;letter-spacing:0.336px;-webkit-text-stroke:0.1px #f5f5f5;">200</span>
<span class="t" id="t45" style="left:450.21px;top:481.03px;font-size:23px;color:#1e2023;letter-spacing:0.865px;-webkit-text-stroke:0.1px #f5f5f5;">xhr</span>
<span class="t" id="t46" style="left:552.22px;top:481.03px;font-size:23px;color:#1e2023;letter-spacing:0.205px;-webkit-text-stroke:0.1px #f5f5f5;">103592790:5</span>
<span class="t" id="t47" style="left:744.59px;top:481.03px;font-size:23px;color:#1e2023;letter-spacing:-0.288px;-webkit-text-stroke:0.1px #f5f5f5;">2.3 kB</span>
<span class="t" id="t48" style="left:834.60px;top:481.03px;font-size:23px;color:#1e2023;letter-spacing:0.155px;-webkit-text-stroke:0.1px #f5f5f5;">398 ms</span>
<span class="t" id="t49" style="left:49.04px;top:523.03px;font-size:23px;color:#1e2023;letter-spacing:0.402px;-webkit-text-stroke:0.1px #fff;">voddrm.token.dWluPTky...</span>
<span class="t" id="t50" style="left:349.46px;top:523.03px;font-size:23px;color:#1e2023;letter-spacing:0.336px;-webkit-text-stroke:0.1px #fff;">200</span>
<span class="t" id="t51" style="left:450.21px;top:523.03px;font-size:23px;color:#1e2023;letter-spacing:0.865px;-webkit-text-stroke:0.1px #fff;">xhr</span>
<span class="t" id="t52" style="left:552.22px;top:523.03px;font-size:23px;color:#1e2023;letter-spacing:0.205px;-webkit-text-stroke:0.1px #fff;">103592790:5</span>
<span class="t" id="t53" style="left:737.14px;top:523.03px;font-size:23px;color:#1e2023;letter-spacing:-0.053px;-webkit-text-stroke:0.1px #fff;">144 kB</span>
<span class="t" id="t54" style="left:834.60px;top:523.03px;font-size:23px;color:#1e2023;letter-spacing:0.155px;-webkit-text-stroke:0.1px #fff;">326 ms</span>
<span class="t" id="t55" style="left:49.04px;top:565.03px;font-size:23px;color:#1e2023;letter-spacing:0.402px;-webkit-text-stroke:0.1px #f5f5f5;">voddrm.token.dWluPTky...</span>
<span class="t" id="t56" style="left:349.46px;top:565.03px;font-size:23px;color:#1e2023;letter-spacing:0.336px;-webkit-text-stroke:0.1px #f5f5f5;">200</span>
<span class="t" id="t57" style="left:450.21px;top:565.03px;font-size:23px;color:#1e2023;letter-spacing:0.865px;-webkit-text-stroke:0.1px #f5f5f5;">xhr</span>
<span class="t" id="t58" style="left:552.22px;top:565.03px;font-size:23px;color:#1e2023;letter-spacing:0.205px;-webkit-text-stroke:0.1px #f5f5f5;">103592790:5</span>
<span class="t" id="t59" style="left:737.14px;top:565.03px;font-size:23px;color:#1e2023;letter-spacing:-0.053px;-webkit-text-stroke:0.1px #f5f5f5;">143 kB</span>
<span class="t" id="t60" style="left:834.14px;top:565.03px;font-size:23px;color:#1e2023;letter-spacing:0.296px;-webkit-text-stroke:0.1px #f5f5f5;">155 ms</span>
<span class="t" id="t61" style="left:49.04px;top:607.03px;font-size:23px;color:#1e2023;letter-spacing:0.402px;-webkit-text-stroke:0.1px #fff;">voddrm.token.dWluPTky...</span>
<span class="t" id="t62" style="left:349.46px;top:607.03px;font-size:23px;color:#1e2023;letter-spacing:0.336px;-webkit-text-stroke:0.1px #fff;">200</span>
<span class="t" id="t63" style="left:450.21px;top:607.03px;font-size:23px;color:#1e2023;letter-spacing:0.865px;-webkit-text-stroke:0.1px #fff;">xhr</span>
<span class="t" id="t64" style="left:552.22px;top:607.03px;font-size:23px;color:#1e2023;letter-spacing:0.205px;-webkit-text-stroke:0.1px #fff;">103592790:5</span>
<span class="t" id="t65" style="left:737.14px;top:607.03px;font-size:23px;color:#1e2023;letter-spacing:-0.053px;-webkit-text-stroke:0.1px #fff;">143 kB</span>
<span class="t" id="t66" style="left:834.14px;top:607.03px;font-size:23px;color:#1e2023;letter-spacing:0.296px;-webkit-text-stroke:0.1px #fff;">149 ms</span></div>
<div style="position:absolute;left:1316px;top:255px;width:5px;height:160px;background:#fff;"></div><div style="position:absolute;left:1317px;top:255px;width:4px;height:36px;background:#757575;"></div><div style="position:absolute;left:1318px;top:292px;width:3px;height:123px;background:#dde4f7;"></div>
</body></html>
